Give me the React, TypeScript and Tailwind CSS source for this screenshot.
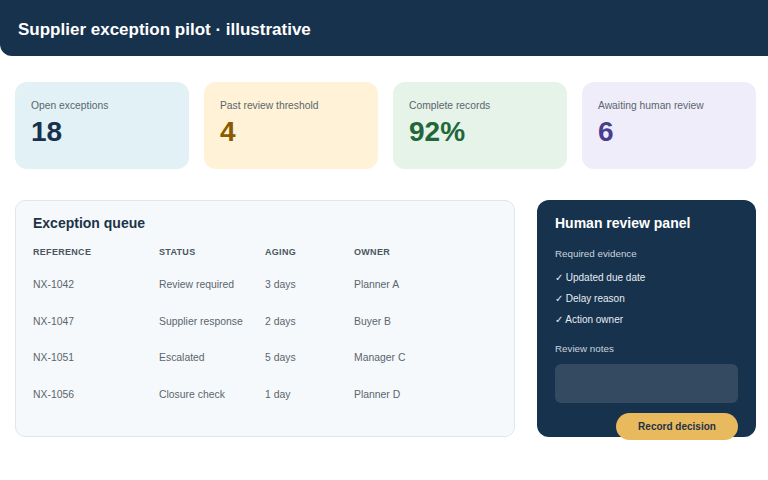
import React from "react";

const stats = [
  { label: "Open exceptions", value: "18", bg: "bg-[#e2f1f5]", fg: "text-[#17324d]" },
  { label: "Past review threshold", value: "4", bg: "bg-[#fff2d6]", fg: "text-[#8a5a00]" },
  { label: "Complete records", value: "92%", bg: "bg-[#e5f3e8]", fg: "text-[#22663a]" },
  { label: "Awaiting human review", value: "6", bg: "bg-[#efedfa]", fg: "text-[#4a3d8f]" },
];

const rows = [
  ["NX-1042", "Review required", "3 days", "Planner A"],
  ["NX-1047", "Supplier response", "2 days", "Buyer B"],
  ["NX-1051", "Escalated", "5 days", "Manager C"],
  ["NX-1056", "Closure check", "1 day", "Planner D"],
];

export default function App() {
  return (
    <div
      className="w-[768px] h-[480px] bg-white overflow-hidden"
      style={{ fontFamily: '"Liberation Sans", Arial, sans-serif' }}
    >
      <header className="h-[56px] bg-[#17324d] rounded-bl-[12px] flex items-center pl-[18px] pt-[3px]">
        <h1 className="text-white text-[17px] font-bold">Supplier exception pilot · illustrative</h1>
      </header>

      <div className="pl-[15px] pr-[12px] pt-[26px]">
        <div className="grid grid-cols-4 gap-[15px]">
          {stats.map((s) => (
            <div key={s.label} className={`${s.bg} h-[87px] rounded-[12px] pl-[16px] pt-[16px]`}>
              <div className="text-[10.3px] leading-[16px] text-[#5a666f]">{s.label}</div>
              <div className={`${s.fg} text-[28px] leading-[32px] font-bold mt-[2px]`}>{s.value}</div>
            </div>
          ))}
        </div>

        <div className="flex gap-[22px] mt-[31px]">
          <section className="w-[500px] h-[237px] bg-[#f6f9fb] border border-[#dfe7ec] rounded-[10px] pl-[17px] pt-[13px]">
            <h2 className="text-[14px] leading-[18px] font-bold text-[#1d3347]">Exception queue</h2>
            <div className="grid grid-cols-[126px_106px_89px_1fr] mt-[15px] text-[9px] leading-[10px] font-bold tracking-[0.3px] text-[#4b5661]">
              <div>REFERENCE</div>
              <div>STATUS</div>
              <div>AGING</div>
              <div>OWNER</div>
            </div>
            <div className="mt-[10px]">
              {rows.map((r) => (
                <div key={r[0]} className="grid grid-cols-[126px_106px_89px_1fr] h-[36.5px] items-center text-[10.4px] text-[#5b656e]">
                  {r.map((c) => (
                    <div key={c}>{c}</div>
                  ))}
                </div>
              ))}
            </div>
          </section>

          <aside className="w-[219px] h-[237px] bg-[#17324d] rounded-[12px] pl-[18px] pr-[18px] pt-[14px]">
            <h2 className="text-[14px] leading-[18px] font-bold text-white">Human review panel</h2>
            <div className="mt-[14px] text-[9.8px] leading-[16px] text-[#c9d4de]">Required evidence</div>
            <ul className="mt-[5px] text-[10px] leading-[21px] text-[#e6edf2]">
              <li>✓ Updated due date</li>
              <li>✓ Delay reason</li>
              <li>✓ Action owner</li>
            </ul>
            <div className="mt-[11px] text-[9.8px] leading-[16px] text-[#c9d4de]">Review notes</div>
            <div className="mt-[7px] h-[39px] rounded-[6px] bg-[#344a60]" />
            <div className="flex justify-end mt-[10px]">
              <button className="w-[122px] h-[27px] rounded-full bg-[#e9b95e] text-[10px] font-bold text-[#1d3347]">
                Record decision
              </button>
            </div>
          </aside>
        </div>
      </div>
    </div>
  );
}
